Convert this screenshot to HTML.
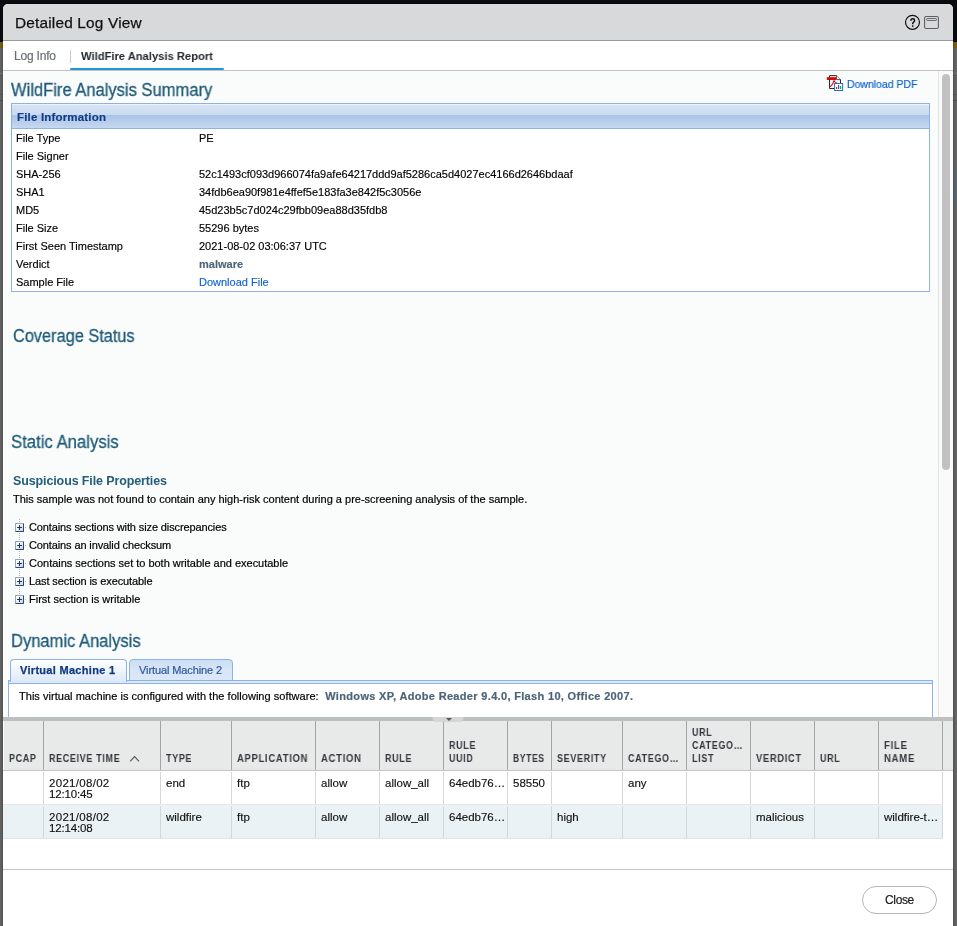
<!DOCTYPE html>
<html><head><meta charset="utf-8">
<style>
*{box-sizing:border-box;margin:0;padding:0}
html,body{width:957px;height:926px;overflow:hidden}
body{position:relative;background:#646464;font-family:"Liberation Sans",sans-serif;color:#000}
.abs,.abs2 *{position:absolute;white-space:nowrap}
.abs{position:absolute;white-space:nowrap}
#bgtop{left:0;top:0;width:957px;height:42px;background:#080c10}
#bggold{left:0;top:42px;width:957px;height:6px;background:#7d5c17}
#dlg{left:3px;top:4px;width:950px;height:930px;background:#fff;border-radius:5px 5px 0 0;overflow:hidden;box-shadow:0 0 3px rgba(0,0,0,.45)}
#pg{left:-3px;top:-4px;width:957px;height:926px}
#titlebar{left:3px;top:4px;width:950px;height:36px;background:#d8d9db}
#titleline{left:3px;top:40px;width:950px;height:1px;background:#9b9b9b}
#title{left:15.3px;top:13px;font-size:15.4px;line-height:20px;color:#111;letter-spacing:.18px;-webkit-text-stroke:.25px #111}
#tabline{left:3px;top:70px;width:950px;height:1px;background:#c2c2c2}
#tab1{left:14px;top:47.8px;font-size:12px;line-height:16px;color:#6a7076;letter-spacing:-0.2px;-webkit-text-stroke:.2px #6a7076}
#tabsep{left:70px;top:50px;width:1px;height:13px;background:#c8c8c8}
#tab2{left:81px;top:47.6px;font-size:11.5px;line-height:16px;color:#25292d;font-weight:bold;transform-origin:0 50%;transform:scaleX(.973)}
#tabul{left:70px;top:68px;width:154px;height:2px;background:#1e96d9;border-radius:1px}
#content{left:4px;top:71px;width:949px;height:646px;background:#fafcfb}
.h1{font-size:17.5px;line-height:22px;color:#1f5a79;-webkit-text-stroke:.3px #1f5a79;transform-origin:0 50%;transform:scaleX(.945)}
.t11{font-size:11px;line-height:14px;-webkit-text-stroke:.15px}
.tah{font-size:11px;line-height:14px;-webkit-text-stroke:.2px}
/* scrollbar */
#sbtrack{left:938px;top:71px;width:15px;height:646px;background:#fafafa;border-left:1px solid #e4e4e4}
#sbthumb{left:942px;top:74px;width:8px;height:396px;background:#c1c1c1;border-radius:4px}
/* file info panel */
#fip{left:11px;top:103px;width:919px;height:189px;border:1px solid #8db2e3;background:#fff}
#fih{left:12px;top:104px;width:917px;height:25px;background:linear-gradient(#eef3fb 0,#eef3fb 4%,#d6e3f3 5%,#c9dbf1 45%,#a9c4e8 47%,#b1caea 62%,#c5d8f0 100%);border-bottom:1px solid #8db2e3}
#fit{left:17px;top:110px;font-size:11.5px;line-height:14px;font-weight:bold;color:#133c84;letter-spacing:.18px;-webkit-text-stroke:.15px #133c84}
.lab{left:16px}.val{left:199px}

/* tree */
.plus{width:9px;height:9px;left:15px;border:1px solid;border-color:#8ea3c2 #2c4b72 #2c4b72 #8ea3c2;background:linear-gradient(135deg,#fff 20%,#c3d1e8 100%);border-radius:1px}
.plus:before{content:"";position:absolute;left:1px;top:3px;width:5px;height:1px;background:#1f3a5c}
.plus:after{content:"";position:absolute;left:3px;top:1px;width:1px;height:5px;background:#1f3a5c}
.halo{left:14px;width:11px;height:11px;background:#fff}
#dots{left:19px;top:519px;width:1px;height:76px;background:repeating-linear-gradient(#b4b4b4 0,#b4b4b4 1px,transparent 1px,transparent 2px)}
.hdot{left:25px;width:1px;height:1px;background:#b4b4b4}
/* vm tabs */
#vmband{left:8px;top:680px;width:925px;height:4px;background:#dbe8f8;border:1px solid #8db2e3}
#vmbody{left:8px;top:683px;width:925px;height:40px;background:#fff;border:1px solid #8db2e3}
#vmt1{left:10px;top:659px;width:117px;height:23px;border:1px solid #8db2e3;border-bottom:none;border-radius:4px 4px 0 0;background:linear-gradient(#fff 0,#f3f8fe 35%,#dbe8f8 100%)}
#vmt2{left:129px;top:659px;width:104px;height:22px;border:1px solid #8db2e3;border-radius:4px 4px 0 0;background:linear-gradient(#cddef4 0,#d7e5f7 50%,#dbe8f8 100%)}
#vmt1t{left:20px;top:663px;font-size:11px;line-height:14px;font-weight:bold;color:#123b82;letter-spacing:.3px;-webkit-text-stroke:.25px #123b82}
#vmt2t{left:139px;top:663px;font-size:11px;line-height:14px;color:#30599a;letter-spacing:-.1px;-webkit-text-stroke:.2px #30599a}
/* split */
#split{left:3px;top:717px;width:950px;height:4px;background:#bdc0c1}
#splith{left:432px;top:717px;width:32px;height:5px;background:#d4d5d6;clip-path:polygon(0 0,100% 0,94% 100%,6% 100%);z-index:2}
#splita{left:445.5px;top:718px;width:0;height:0;border-left:3px solid transparent;border-right:3px solid transparent;border-top:3.5px solid #55585b;z-index:3}
/* grid */
#ghead{left:4px;top:721px;width:949px;height:49px;background:#e8eaea}
#gheadb{left:3px;top:770px;width:950px;height:1px;background:#c2c5c7}
#gwhite{left:3px;top:771px;width:950px;height:160px;background:#fff}
.cs{top:721px;width:1px;height:49px;background:#a4a4a4}
.rs{top:772px;width:1px;height:32px;background:#d6d6d6}
.rs2{top:806px;width:1px;height:32px;background:#d3d7d9}
#row2{left:3px;top:805px;width:940px;height:33px;background:#eaf2f5}
#row1b{left:3px;top:804px;width:940px;height:1px;background:#e8e8e8}
#row2b{left:3px;top:838px;width:940px;height:1px;background:#dfe4e6}
.gh{font-size:10px;line-height:13px;font-weight:bold;color:#32373c;letter-spacing:.8px;white-space:pre;transform-origin:0 50%;transform:scaleX(.89)}
.gc{font-size:11.5px;line-height:11px;color:#111;white-space:pre;margin-top:1px;-webkit-text-stroke:.15px}
#footl{left:3px;top:869px;width:950px;height:1px;background:#c4c4c4}
#close{left:862px;top:886px;width:75px;height:28px;border:1px solid #b5b5b5;border-radius:14px;background:#fff}
#closet{left:885px;top:892px;font-size:12px;line-height:16px;color:#222;letter-spacing:-.35px;-webkit-text-stroke:.2px}
.h1,.t11,.tah,.gh,.gc,#title,#tab1,#tab2,#fit,#h_sus,#vmt1t,#vmt2t,#closet,#helpic{will-change:transform}
</style></head><body>
<div class="abs" id="bgtop"></div><div class="abs" id="bggold"></div>
<div class="abs" style="left:0;top:72px;width:957px;height:3px;background:#6c6c6c"></div>
<div class="abs" style="left:0;top:75px;width:957px;height:1px;background:#585858"></div>
<div class="abs" style="left:0;top:94px;width:957px;height:1px;background:#5a5a5a"></div>
<div class="abs" style="left:0;top:100px;width:957px;height:1px;background:#4e4e4e"></div>
<div class="abs" style="left:950px;top:170px;width:7px;height:36px;background:#5c6670"></div>
<div class="abs" id="dlg"><div class="abs" id="pg">
 <div class="abs" id="titlebar"></div><div class="abs" id="titleline"></div>
 <div class="abs" id="title">Detailed Log View</div>
 <div class="abs" id="tab1">Log Info</div><div class="abs" id="tabsep"></div>
 <div class="abs" id="tab2">WildFire Analysis Report</div>
 <div class="abs" id="tabul"></div><div class="abs" id="tabline"></div>
 <div class="abs" id="content"></div>
 <div class="abs" id="sbtrack"></div><div class="abs" id="sbthumb"></div>

 <div class="abs h1" id="h_sum" style="left:11px;top:78.5px">WildFire Analysis Summary</div>
 <div class="abs tah" id="dlpdf" style="left:846.8px;top:77px;color:#0f62cc;transform-origin:0 50%;transform:scaleX(.952)">Download PDF</div>
 <div class="abs" id="fip"></div><div class="abs" id="fih"></div>
 <div class="abs" id="fit">File Information</div>
 <div class="abs t11 lab" style="top:131px">File Type</div><div class="abs t11 val" style="top:131px">PE</div>
 <div class="abs t11 lab" style="top:149px">File Signer</div>
 <div class="abs t11 lab" style="top:167px">SHA-256</div><div class="abs t11 val" style="top:167px">52c1493cf093d966074fa9afe64217ddd9af5286ca5d4027ec4166d2646bdaaf</div>
 <div class="abs t11 lab" style="top:185px">SHA1</div><div class="abs t11 val" style="top:185px">34fdb6ea90f981e4ffef5e183fa3e842f5c3056e</div>
 <div class="abs t11 lab" style="top:203px">MD5</div><div class="abs t11 val" style="top:203px">45d23b5c7d024c29fbb09ea88d35fdb8</div>
 <div class="abs t11 lab" style="top:221px">File Size</div><div class="abs t11 val" style="top:221px">55296 bytes</div>
 <div class="abs t11 lab" style="top:239px">First Seen Timestamp</div><div class="abs t11 val" style="top:239px">2021-08-02 03:06:37 UTC</div>
 <div class="abs t11 lab" style="top:257px">Verdict</div><div class="abs t11 val" style="top:257px;font-weight:bold;color:#4d6478">malware</div>
 <div class="abs t11 lab" style="top:275px">Sample File</div><div class="abs t11 val" style="top:275px;color:#1162cc">Download File</div>

 <div class="abs h1" id="h_cov" style="left:12.7px;top:324.8px;transform:scaleX(.933)">Coverage Status</div>
 <div class="abs h1" id="h_sta" style="left:10.5px;top:431px;transform:scaleX(.955)">Static Analysis</div>
 <div class="abs" id="h_sus" style="left:13px;top:473px;font-size:12.5px;line-height:16px;letter-spacing:-.12px;font-weight:bold;color:#235d7c">Suspicious File Properties</div>
 <div class="abs tah" id="p_sam" style="left:13px;top:492px">This sample was not found to contain any high-risk content during a pre-screening analysis of the sample.</div>
 <div class="abs tah ti" style="left:29px;top:520px;letter-spacing:-.117px">Contains sections with size discrepancies</div>
 <div class="abs tah ti" style="left:29px;top:538px;letter-spacing:-.12px">Contains an invalid checksum</div>
 <div class="abs tah ti" style="left:29px;top:556px;letter-spacing:-.017px">Contains sections set to both writable and executable</div>
 <div class="abs tah ti" style="left:29px;top:574px;letter-spacing:-.096px">Last section is executable</div>
 <div class="abs tah ti" style="left:29px;top:592px">First section is writable</div>
 <div class="abs h1" id="h_dyn" style="left:11px;top:629.7px">Dynamic Analysis</div>

 <div class="abs" id="dots"></div>
 <div class="abs halo" style="top:522px"></div><div class="abs plus" style="top:523px"></div><div class="abs hdot" style="top:527px"></div>
 <div class="abs halo" style="top:540px"></div><div class="abs plus" style="top:541px"></div><div class="abs hdot" style="top:545px"></div>
 <div class="abs halo" style="top:558px"></div><div class="abs plus" style="top:559px"></div><div class="abs hdot" style="top:563px"></div>
 <div class="abs halo" style="top:576px"></div><div class="abs plus" style="top:577px"></div><div class="abs hdot" style="top:581px"></div>
 <div class="abs halo" style="top:594px"></div><div class="abs plus" style="top:595px"></div><div class="abs hdot" style="top:599px"></div>

 <div class="abs" id="vmbody"></div><div class="abs" id="vmband"></div>
 <div class="abs" id="vmt1"></div><div class="abs" id="vmt2"></div>
 <div class="abs" id="vmt1t">Virtual Machine 1</div><div class="abs" id="vmt2t">Virtual Machine 2</div>
 <div class="abs tah" id="vmtxt" style="left:19.3px;top:689px;letter-spacing:.03px">This virtual machine is configured with the following software: <b id="vmb" style="color:#4d6478;letter-spacing:.33px;margin-left:3.5px">Windows XP, Adobe Reader 9.4.0, Flash 10, Office 2007.</b></div>
 <div class="abs" id="split"></div><div class="abs" id="splith"></div><div class="abs" id="splita"></div>
 <div class="abs" id="ghead"></div><div class="abs" id="gheadb"></div><div class="abs" id="gwhite"></div>
 <div class="abs" id="row2"></div><div class="abs" id="row1b"></div><div class="abs" id="row2b"></div>
 <div class="abs cs" style="left:43px"></div><div class="abs rs" style="left:43px"></div><div class="abs rs2" style="left:43px"></div>
 <div class="abs cs" style="left:160px"></div><div class="abs rs" style="left:160px"></div><div class="abs rs2" style="left:160px"></div>
 <div class="abs cs" style="left:231px"></div><div class="abs rs" style="left:231px"></div><div class="abs rs2" style="left:231px"></div>
 <div class="abs cs" style="left:315px"></div><div class="abs rs" style="left:315px"></div><div class="abs rs2" style="left:315px"></div>
 <div class="abs cs" style="left:379px"></div><div class="abs rs" style="left:379px"></div><div class="abs rs2" style="left:379px"></div>
 <div class="abs cs" style="left:443px"></div><div class="abs rs" style="left:443px"></div><div class="abs rs2" style="left:443px"></div>
 <div class="abs cs" style="left:507px"></div><div class="abs rs" style="left:507px"></div><div class="abs rs2" style="left:507px"></div>
 <div class="abs cs" style="left:551px"></div><div class="abs rs" style="left:551px"></div><div class="abs rs2" style="left:551px"></div>
 <div class="abs cs" style="left:622px"></div><div class="abs rs" style="left:622px"></div><div class="abs rs2" style="left:622px"></div>
 <div class="abs cs" style="left:686px"></div><div class="abs rs" style="left:686px"></div><div class="abs rs2" style="left:686px"></div>
 <div class="abs cs" style="left:750px"></div><div class="abs rs" style="left:750px"></div><div class="abs rs2" style="left:750px"></div>
 <div class="abs cs" style="left:814px"></div><div class="abs rs" style="left:814px"></div><div class="abs rs2" style="left:814px"></div>
 <div class="abs cs" style="left:878px"></div><div class="abs rs" style="left:878px"></div><div class="abs rs2" style="left:878px"></div>
 <div class="abs cs" style="left:942px"></div><div class="abs rs" style="left:942px"></div><div class="abs rs2" style="left:942px"></div>
 <div class="abs gh" style="left:9px;top:752px">PCAP</div>
 <div class="abs gh" style="left:49px;top:752px">RECEIVE TIME</div>
 <div class="abs gh" style="left:166px;top:752px">TYPE</div>
 <div class="abs gh" style="transform:scaleX(0.938);left:237px;top:752px">APPLICATION</div>
 <div class="abs gh" style="transform:scaleX(0.944);left:321px;top:752px">ACTION</div>
 <div class="abs gh" style="left:385px;top:752px">RULE</div>
 <div class="abs gh" style="left:449px;top:739px">RULE
UUID</div>
 <div class="abs gh" style="transform:scaleX(0.849);left:513px;top:752px">BYTES</div>
 <div class="abs gh" style="left:557px;top:752px">SEVERITY</div>
 <div class="abs gh" style="left:628px;top:752px">CATEGO…</div>
 <div class="abs gh" style="left:692px;top:726px">URL
CATEGO…
LIST</div>
 <div class="abs gh" style="transform:scaleX(0.927);left:756px;top:752px">VERDICT</div>
 <div class="abs gh" style="left:820px;top:752px">URL</div>
 <div class="abs gh" style="transform:scaleX(0.95);left:884px;top:739px">FILE
NAME</div>
 <div class="abs gc" style="letter-spacing:.3px;left:49px;top:777px">2021/08/02
<span style="letter-spacing:-.17px">12:10:45</span></div>
 <div class="abs gc" style="left:166px;top:777px">end</div>
 <div class="abs gc" style="left:237px;top:777px">ftp</div>
 <div class="abs gc" style="left:321px;top:777px">allow</div>
 <div class="abs gc" style="left:385px;top:777px">allow_all</div>
 <div class="abs gc" style="left:449px;top:777px">64edb76…</div>
 <div class="abs gc" style="left:513px;top:777px">58550</div>
 <div class="abs gc" style="left:628px;top:777px">any</div>
 <div class="abs gc" style="letter-spacing:.3px;left:49px;top:811px">2021/08/02
<span style="letter-spacing:-.17px">12:14:08</span></div>
 <div class="abs gc" style="left:166px;top:811px">wildfire</div>
 <div class="abs gc" style="left:237px;top:811px">ftp</div>
 <div class="abs gc" style="left:321px;top:811px">allow</div>
 <div class="abs gc" style="left:385px;top:811px">allow_all</div>
 <div class="abs gc" style="left:449px;top:811px">64edb76…</div>
 <div class="abs gc" style="left:557px;top:811px">high</div>
 <div class="abs gc" style="left:756px;top:811px">malicious</div>
 <div class="abs gc" style="left:884px;top:811px">wildfire-t…</div>

 <svg class="abs" id="sortarrow" style="left:129px;top:755px" width="12" height="8" viewBox="0 0 12 8"><path d="M1.2 6.3 L5.6 1.6 L10 6.3" fill="none" stroke="#555" stroke-width="1.1"/></svg>
 <div class="abs" id="footl"></div>
 <div class="abs" id="close"></div><div class="abs" id="closet">Close</div>
 <svg class="abs" id="helpic" style="left:904px;top:14px" width="17" height="17" viewBox="0 0 17 17"><circle cx="8.5" cy="8.3" r="7" fill="none" stroke="#111" stroke-width="1.2"/><path d="M6.9 6.8 C6.9 5.3 7.7 4.8 8.8 4.8 C9.9 4.8 10.6 5.5 10.6 6.4 C10.6 7.9 8.75 8 8.75 9.6 V10.3" fill="none" stroke="#111" stroke-width="1.5"/><circle cx="8.75" cy="12.1" r=".9" fill="#111"/></svg>
 <svg class="abs" id="maxic" style="left:923px;top:15px" width="17" height="15" viewBox="0 0 17 15"><rect x="1.6" y="1.5" width="13.8" height="12" rx="1.6" fill="none" stroke="#5a5f63" stroke-width="1.1"/><rect x="3.7" y="3.5" width="9.7" height="2" rx=".6" fill="none" stroke="#5a5f63" stroke-width=".9"/></svg>
 <svg class="abs" id="pdfic" style="left:826px;top:74px" width="18" height="18" viewBox="0 0 18 18"><path d="M3.5 1.6 H10.6 L14.5 5.6 V14.5 H3.5 Z" fill="#f4f4f4" stroke="#2b2b2b" stroke-width="1"/><path d="M10.6 1.6 V5.6 H14.5" fill="#fff" stroke="#2b2b2b" stroke-width=".8"/><defs><linearGradient id="rg" x1="0" y1="0" x2="0" y2="1"><stop offset="0" stop-color="#f31a1a"/><stop offset=".55" stop-color="#e00008"/><stop offset="1" stop-color="#a80000"/></linearGradient></defs><rect x="0.8" y="3.1" width="9.3" height="2.8" fill="url(#rg)"/><path d="M4 12.6 C6 11.6 7 9.6 8 6.6 C8.6 8 9.4 8.6 10.6 8.8" fill="none" stroke="#e2000f" stroke-width="1.1"/><rect x="8.6" y="9.5" width="8" height="7" fill="#fff" stroke="#1b75b5" stroke-width="1"/><rect x="10" y="13" width="1.2" height="2" fill="#e02020"/><rect x="12" y="11" width="1.2" height="4" fill="#2a55c8"/><rect x="14" y="12" width="1.2" height="3" fill="#1faa3c"/></svg>
</div></div>
</body></html>
